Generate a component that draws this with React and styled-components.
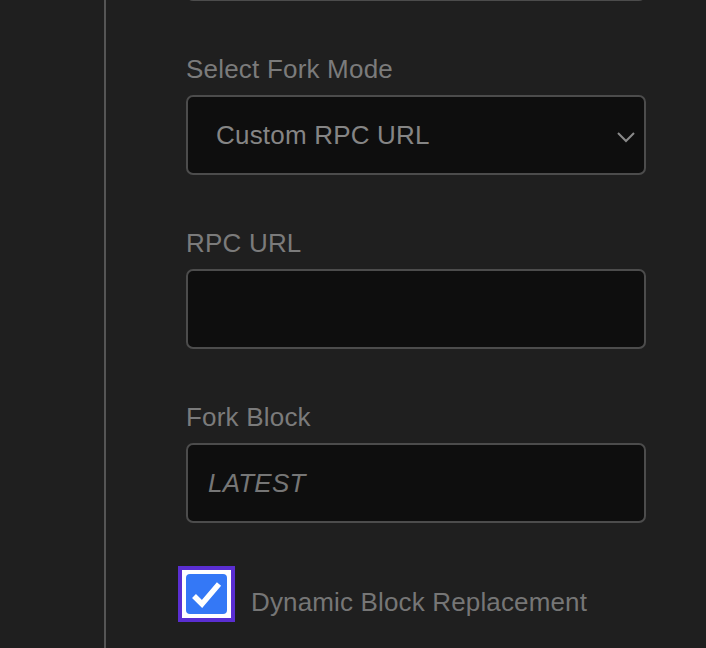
import React from "react";
import styled, { createGlobalStyle } from "styled-components";

const GlobalStyle = createGlobalStyle`
    html, body {
        margin: 0;
        padding: 0;
        background: #1f1f1f;
        overflow: hidden;
    }
`

const Page = styled.div`
    display: flex;
    width: 706px;
    height: 648px;
    overflow: hidden;
    font-family: "Liberation Sans", Arial, sans-serif;
`

const Sidebar = styled.div`
    width: 104px;
    flex-shrink: 0;
    border-right: 2px solid #555555;
`

const Content = styled.div`
    display: flex;
    flex-direction: column;
    gap: 54px;
    width: 460px;
    margin-top: -79px;
    padding-left: 80px;
`

const Field = styled.div`
    display: flex;
    flex-direction: column;
    gap: 11px;
`

const Label = styled.label`
    font-size: 26px;
    line-height: 29px;
    letter-spacing: 0.2px;
    color: #7b7b7b;
`

const Box = styled.div`
    position: relative;
    box-sizing: border-box;
    display: flex;
    align-items: center;
    height: 80px;
    padding-left: ${props => props.$pad}px;
    background: #0e0e0e;
    border: 2px solid #4c4c4c;
    border-radius: 7px;
    font-size: 26px;
    letter-spacing: 0.2px;
    color: ${props => props.$italic ? "#767676" : "#858585"};
    font-style: ${props => props.$italic ? "italic" : "normal"};
`

const Chevron = styled.svg`
    position: absolute;
    right: 8px;
    top: 34px;
`

const CheckRow = styled.div`
    display: flex;
    align-items: center;
    gap: 16px;
    margin-left: -8px;
    margin-top: -11px;
`

const FocusRing = styled.span`
    box-sizing: border-box;
    width: 57px;
    height: 56px;
    padding: 4px;
    border: 4px solid #5a2ed2;
    background: #ffffff;
`

const Tick = styled.span`
    display: block;
    width: 41px;
    height: 40px;
    border-radius: 4px;
    background: #3478f6;
`

const CheckLabel = styled.span`
    margin-top: 17px;
    font-size: 26px;
    letter-spacing: 0.15px;
    color: #767676;
`

const App = () => {
    return (
        <Page>
            <GlobalStyle />
            <Sidebar />
            <Content>
                <Box $pad={20} />
                <Field>
                    <Label>Select Fork Mode</Label>
                    <Box $pad={28}>
                        Custom RPC URL
                        <Chevron width="20" height="12" viewBox="0 0 20 12">
                            <path d="M2 2 L10 10 L18 2" fill="none" stroke="#8a8a8a" strokeWidth="2" />
                        </Chevron>
                    </Box>
                </Field>
                <Field>
                    <Label>RPC URL</Label>
                    <Box $pad={20} />
                </Field>
                <Field>
                    <Label>Fork Block</Label>
                    <Box $pad={20} $italic>LATEST</Box>
                </Field>
                <CheckRow>
                    <FocusRing>
                        <Tick>
                            <svg width="41" height="40" viewBox="0 0 41 40">
                                <path d="M8 22 L16 30 L33 10" fill="none" stroke="#ffffff" strokeWidth="5.5" />
                            </svg>
                        </Tick>
                    </FocusRing>
                    <CheckLabel>Dynamic Block Replacement</CheckLabel>
                </CheckRow>
            </Content>
        </Page>
    )
}

export default App;
